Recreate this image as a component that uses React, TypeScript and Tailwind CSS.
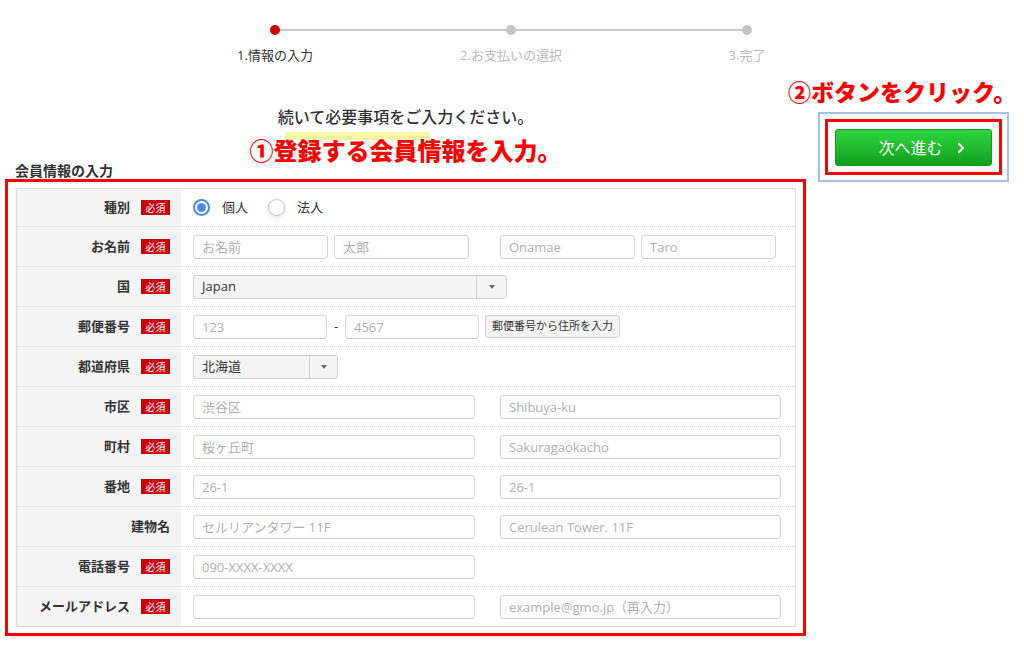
import { ChevronRight } from "lucide-react"

const font = "font-['Open_Sans','Noto_Sans_CJK_JP',sans-serif]"

function Badge() {
  return (
    <span className="inline-flex items-center justify-center w-[29px] h-[15px] bg-[#c8000a] text-white text-[10px] leading-none">
      必須
    </span>
  )
}

function Row({
  label,
  required = true,
  size = "h-[40px] border-b border-dotted border-[#d6d6d6]",
  children,
}: {
  label: string
  required?: boolean
  size?: string
  children?: React.ReactNode
}) {
  return (
    <div className={`flex ${size}`}>
      <div className="w-[164px] shrink-0 bg-[#f5f5f5] flex items-center justify-end gap-[11px] pr-[11px]">
        <span className="text-[13px] font-bold text-[#333]">{label}</span>
        {required && <Badge />}
      </div>
      <div className="flex-1 flex items-center pl-[12px]">{children}</div>
    </div>
  )
}

function Field({ w, ph, cls = "" }: { w: string; ph: string; cls?: string }) {
  return (
    <input
      readOnly
      placeholder={ph}
      className={`h-[24px] border border-[#d4d4d4] rounded-[3px] px-[8px] text-[13px] text-[#333] bg-white outline-none placeholder:text-[#b0b0b0] ${w} ${cls}`}
    />
  )
}

function Select({ value, w, arrow }: { value: string; w: string; arrow: string }) {
  return (
    <div className={`h-[24px] flex border border-[#d0d0d0] rounded-[3px] bg-[#f5f5f5] ${w}`}>
      <span className="flex-1 flex items-center pl-[8px] text-[13px] text-[#333]">{value}</span>
      <span className={`flex items-center justify-center border-l border-[#d0d0d0] ${arrow}`}>
        <span className="w-0 h-0 border-l-[3px] border-r-[3px] border-t-[4px] border-l-transparent border-r-transparent border-t-[#666]" />
      </span>
    </div>
  )
}

function Step({ label, active }: { label: string; active?: boolean }) {
  return (
    <div className="flex flex-col items-center">
      <span className={`w-[10px] h-[10px] rounded-full relative ${active ? "bg-[#d00000]" : "bg-[#c4c4c4]"}`} />
      <span className={`mt-[11px] text-[13px] leading-[18px] ${active ? "text-[#333]" : "text-[#bbb]"}`}>{label}</span>
    </div>
  )
}

export default function App() {
  return (
    <div className={`w-[1024px] h-[650px] bg-white overflow-hidden ${font}`}>
      {/* stepper */}
      <div className="relative ml-[157px] w-[708px] pt-[25px] grid grid-cols-3">
        <div className="absolute left-[118px] right-[118px] top-[29px] h-[2px] bg-[#c8c8c8]" />
        <Step label="1.情報の入力" active />
        <Step label="2.お支払いの選択" />
        <Step label="3.完了" />
      </div>

      <div className="flex items-start mt-[14px]">
        {/* form column */}
        <div className="relative ml-[5px] w-[801px] shrink-0 pt-[27px]">
          <p className="text-center text-[16px] leading-[24px] font-medium text-[#333]">続いて必要事項をご入力ください。</p>
          <div className="ml-[280px] mt-[3px] w-[144px] h-[8px] bg-[#fbf7a0]" />
          <p className="absolute left-0 right-0 top-[57px] text-center text-[24px] leading-[32px] font-black text-[#ff0000] [text-shadow:0_0_2px_#fff,0_0_2px_#fff]">
            ①登録する会員情報を入力。
          </p>
          <h3 className="mt-[22px] pl-[10px] text-[14px] leading-[17px] font-bold text-[#333]">会員情報の入力</h3>

          <div className="border-[3px] border-[#ff0000] pl-[8px] pr-[7px] pt-[6px] pb-[6px]">
            <div className="border border-[#dcdcdc]">
              <Row label="種別" size="h-[38px] border-b border-dotted border-[#d6d6d6]">
                <span className="w-[17px] h-[17px] rounded-full border-2 border-[#4a8af4] flex items-center justify-center">
                  <span className="w-[9px] h-[9px] rounded-full bg-[#4a8af4]" />
                </span>
                <span className="ml-[12px] text-[13px] text-[#333]">個人</span>
                <span className="ml-[20px] w-[17px] h-[17px] rounded-full border border-[#c8c8c8] bg-white shadow-[0_1px_4px_rgba(0,0,0,0.15)]" />
                <span className="ml-[12px] text-[13px] text-[#333]">法人</span>
              </Row>
              <Row label="お名前">
                <Field w="w-[135px]" ph="お名前" />
                <Field w="w-[135px]" ph="太郎" cls="ml-[6px]" />
                <Field w="w-[135px]" ph="Onamae" cls="ml-[31px]" />
                <Field w="w-[135px]" ph="Taro" cls="ml-[6px]" />
              </Row>
              <Row label="国">
                <Select value="Japan" w="w-[314px]" arrow="w-[30px]" />
              </Row>
              <Row label="郵便番号">
                <Field w="w-[134px]" ph="123" />
                <span className="w-[18px] text-center text-[13px] text-[#333]">-</span>
                <Field w="w-[134px]" ph="4567" />
                <button className="ml-[6px] h-[23px] w-[135px] border border-[#d0d0d0] rounded-[3px] bg-[#f3f3f3] text-[11px] text-[#333]">
                  郵便番号から住所を入力
                </button>
              </Row>
              <Row label="都道府県">
                <Select value="北海道" w="w-[145px]" arrow="w-[28px]" />
              </Row>
              <Row label="市区">
                <Field w="w-[282px]" ph="渋谷区" />
                <Field w="w-[281px]" ph="Shibuya-ku" cls="ml-[25px]" />
              </Row>
              <Row label="町村">
                <Field w="w-[282px]" ph="桜ヶ丘町" />
                <Field w="w-[281px]" ph="Sakuragaokacho" cls="ml-[25px]" />
              </Row>
              <Row label="番地">
                <Field w="w-[282px]" ph="26-1" />
                <Field w="w-[281px]" ph="26-1" cls="ml-[25px]" />
              </Row>
              <Row label="建物名" required={false}>
                <Field w="w-[282px]" ph="セルリアンタワー 11F" />
                <Field w="w-[281px]" ph="Cerulean Tower. 11F" cls="ml-[25px]" />
              </Row>
              <Row label="電話番号">
                <Field w="w-[282px]" ph="090-XXXX-XXXX" />
              </Row>
              <Row label="メールアドレス" size="h-[39px]">
                <Field w="w-[282px]" ph="" />
                <Field w="w-[281px]" ph="example@gmo.jp（再入力）" cls="ml-[25px]" />
              </Row>
            </div>
          </div>
        </div>

        {/* button column */}
        <div className="ml-[12px] w-[200px]">
          <p className="-ml-[30px] whitespace-nowrap text-[23px] leading-[29px] font-black text-[#ff0000] [text-shadow:0_0_2px_#fff,0_0_2px_#fff]">
            ②ボタンをクリック。
          </p>
          <div className="mt-[5px] w-[191px] border-2 border-[#a9c0e4] p-[5px]">
            <div className="border-[3px] border-[#ff0000] p-[7px] pb-[6px] pr-[6px]">
              <button className="w-[157px] h-[37px] flex items-center justify-center gap-[10px] pl-[20px] rounded-[3px] border border-[#119c1e] bg-gradient-to-b from-[#2fd63f] to-[#10a01c] text-white text-[16px]">
                次へ進む
                <ChevronRight size={16} strokeWidth={3} />
              </button>
            </div>
          </div>
        </div>
      </div>
    </div>
  )
}
